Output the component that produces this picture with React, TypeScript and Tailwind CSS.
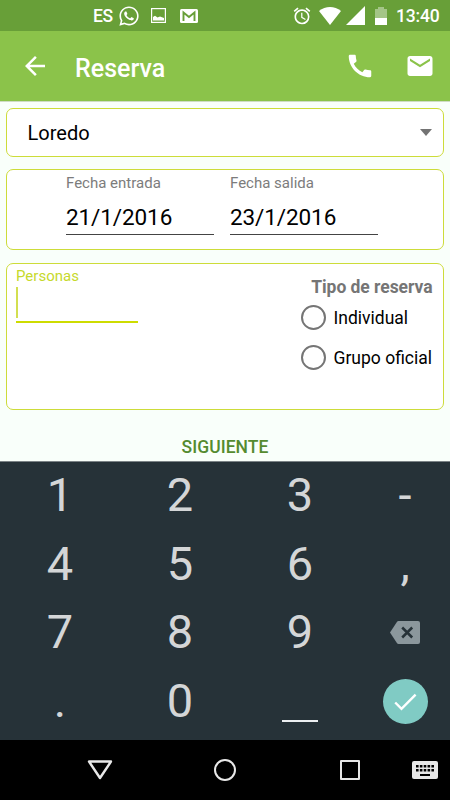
import React, { useState } from 'react';
import { MdArrowBack, MdCall, MdEmail, MdAlarm } from 'react-icons/md';
import { FaWhatsapp } from 'react-icons/fa';

const KEY_ROWS = [
  ['1', '2', '3', '-'],
  ['4', '5', '6', ','],
  ['7', '8', '9', 'backspace'],
  ['.', '0', 'space', 'done'],
];

const BOOKING_TYPES = ['Individual', 'Grupo oficial'];

const StatusBar: React.FC = () => (
  <div className="flex h-[31px] items-center bg-[#689f38] text-white">
    <span className="ml-[93px] mt-0.5 w-[26px] text-[17.5px] font-medium leading-none tracking-[-0.5px]">ES</span>
    <FaWhatsapp className="-ml-px size-[22px]" />
    <svg className="ml-[11px] size-[15px]" viewBox="0 0 15 15">
      <rect x="0.6" y="0.6" width="13.8" height="13.8" fill="none" stroke="currentColor" strokeWidth="1.2" />
      <path d="M2 12.500V9l2-1.200 2.500 1.700 2.500-1L13 10v2.500z" fill="currentColor" />
    </svg>
    <svg className="ml-[14px] h-[14px] w-[18px]" viewBox="0 0 18 14">
      <rect width="18" height="14" rx="1.5" fill="currentColor" />
      <path d="M3.500 12V3.500L9 8l5.500-4.500V12" fill="none" stroke="#689f38" strokeWidth="1.9" />
    </svg>
    <MdAlarm className="ml-[94px] size-[20px]" />
    <svg className="ml-[7px] h-[18px] w-[22px]" viewBox="0 0 22 18">
      <path d="M0 4C6.5-1.2 15.5-1.2 22 4L11 18z" fill="currentColor" />
    </svg>
    <svg className="ml-[5px] size-[19px]" viewBox="0 0 19 19">
      <path d="M0 19L19 0v19z" fill="currentColor" />
    </svg>
    <svg className="ml-[10px] h-[18px] w-[12px]" viewBox="0 0 12 18">
      <path d="M0 2h3V0h6v2h3v9H0z" fill="currentColor" opacity="0.4" />
      <path d="M0 11h12v7H0z" fill="currentColor" />
    </svg>
    <span className="ml-[9px] mt-0.5 text-[17.5px] font-medium leading-none tracking-[-0.2px]">13:40</span>
  </div>
);

const AppBar: React.FC = () => (
  <header className="flex h-[70px] items-center bg-[#8bc34a] pr-[15px] text-white">
    <button type="button" aria-label="Atrás" className="ml-5">
      <MdArrowBack className="size-[30px]" />
    </button>
    <h1 className="ml-[25px] mt-1 flex-1 text-[25px] font-medium leading-none">Reserva</h1>
    <button type="button" aria-label="Llamar">
      <MdCall className="size-[30px]" />
    </button>
    <button type="button" aria-label="Correo" className="ml-[30px]">
      <MdEmail className="size-[30px]" />
    </button>
  </header>
);

interface DateFieldProps {
  label: string;
  value: string;
}

const DateField: React.FC<DateFieldProps> = ({ label, value }) => (
  <div className="w-[148px]">
    <div className="pt-[4px] text-[15px] leading-[18px] text-[#7c7c7c]">{label}</div>
    <div className="mt-[10px] h-[33px] border-b border-[#444] text-[22.5px] leading-[30px] tracking-[-0.1px] text-black">
      {value}
    </div>
  </div>
);

const Key: React.FC<{ value: string }> = ({ value }) => {
  if (value === 'backspace') {
    return (
      <svg className="-mt-0.5 h-[23px] w-[30px]" viewBox="0 0 30 23">
        <path
          d="M8.5 0H28a2 2 0 0 1 2 2v19a2 2 0 0 1-2 2H8.500a2 2 0 0 1-1.600-.9L0 11.500 6.900.9A2 2 0 0 1 8.500 0z"
          fill="#8b979c"
        />
        <path d="M12.200 6.500l10 10M22.200 6.500l-10 10" stroke="#263238" strokeWidth="2.5" />
      </svg>
    );
  }
  if (value === 'done') {
    return (
      <span className="flex size-[45px] items-center justify-center rounded-full bg-[#80cbc4]">
        <svg className="h-[18px] w-[23px]" viewBox="0 0 23 18">
          <path d="M1.200 9.500l6.300 6.300L21.600 1.700" fill="none" stroke="#fff" strokeWidth="2.4" />
        </svg>
      </span>
    );
  }
  if (value === 'space') {
    return <span className="mt-[38px] h-[2px] w-[36px] bg-[#eceff1]" />;
  }
  return <span className="-mt-[3px]">{value}</span>;
};

const Keypad: React.FC = () => (
  <div className="grid h-[279px] grid-cols-[120px_120px_120px_90px] grid-rows-4 border-t border-[#7b8386] bg-[#263238] pb-[4px] text-[47px] leading-none text-[#d4d6d7]">
    {KEY_ROWS.flat().map((key) => (
      <button key={key} type="button" aria-label={key} className="flex items-center justify-center">
        <Key value={key} />
      </button>
    ))}
  </div>
);

const NavBar: React.FC = () => (
  <nav className="flex h-[60px] items-center bg-black text-[#e8e8e8]">
    <svg className="ml-[87px] h-[20px] w-[26px]" viewBox="0 0 26 20">
      <path d="M2 1.500h22L13 18z" fill="none" stroke="currentColor" strokeWidth="2.4" strokeLinejoin="round" />
    </svg>
    <span className="ml-[101px] size-[22px] rounded-full border-2 border-current" />
    <span className="ml-[104px] size-[20px] rounded-[1px] border-2 border-current" />
    <svg className="ml-[52px] h-[18px] w-[26px]" viewBox="0 0 26 18">
      <rect width="26" height="18" rx="2" fill="currentColor" />
      <path d="M4 5.200h18M4 9.200h18" stroke="#000" strokeWidth="2.4" strokeDasharray="2.6 1.25" />
      <path d="M8 14h10" stroke="#000" strokeWidth="2" />
    </svg>
  </nav>
);

const App: React.FC = () => {
  const [bookingType, setBookingType] = useState<string | null>(null);

  return (
    <div className="flex h-[800px] w-[450px] flex-col overflow-hidden bg-[#f9fffa] font-[Roboto,sans-serif]">
      <StatusBar />
      <AppBar />

      <main className="flex flex-1 flex-col border-t border-[#cfdcc4] px-[6px] pt-[6px]">
        <div className="flex h-[49px] items-center justify-between rounded-[7px] border border-[#cddc39] bg-white pl-[20.5px] pr-[11px]">
          <span className="text-[20px] leading-none text-black">Loredo</span>
          <svg className="h-[7px] w-[12px]" viewBox="0 0 12 7">
            <path d="M0 0h12L6 7z" fill="#737373" />
          </svg>
        </div>

        <div className="mt-[12px] flex h-[81px] gap-4 rounded-[7px] border border-[#cddc39] bg-white pl-[59px]">
          <DateField label="Fecha entrada" value="21/1/2016" />
          <DateField label="Fecha salida" value="23/1/2016" />
        </div>

        <div className="mt-[13px] flex h-[147px] justify-between rounded-[7px] border border-[#cddc39] bg-white pl-[9px] pr-[10.5px]">
          <div className="w-[122px]">
            <div className="pt-[3px] text-[15px] leading-[18px] text-[#c6d92c]">Personas</div>
            {/* focused empty field, caret only */}
            <div className="mt-[2px] h-[36px] border-b-2 border-[#cddc00]">
              <div className="h-[31px] w-[2px] bg-[#d3df50]" />
            </div>
          </div>
          <div className="w-[132px]">
            <div className="pt-[13px] text-right text-[17.5px] font-bold leading-[20px] tracking-[-0.05px] text-[#757575]">
              Tipo de reserva
            </div>
            {BOOKING_TYPES.map((type) => (
              <button
                key={type}
                type="button"
                className="flex h-10 w-full items-center whitespace-nowrap text-[17.5px] leading-none text-black"
                onClick={() => setBookingType(type)}
              >
                <span className="mr-2 flex size-[25px] shrink-0 items-center justify-center rounded-full border-2 border-[#757575]">
                  {bookingType === type && <span className="size-3 rounded-full bg-[#cddc39]" />}
                </span>
                <span className="mt-1">{type}</span>
              </button>
            ))}
          </div>
        </div>

        <button
          type="button"
          className="mt-[27px] self-center text-[17.5px] font-medium leading-[20px] tracking-[0.05px] text-[#558b2f]"
        >
          SIGUIENTE
        </button>
      </main>

      <Keypad />
      <NavBar />
    </div>
  );
};

export default App;
